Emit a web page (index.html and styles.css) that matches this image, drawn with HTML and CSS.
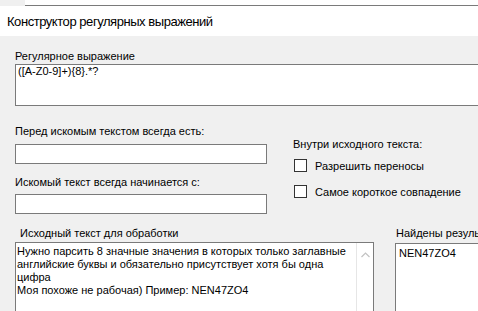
FILE: index.html
```html
<!DOCTYPE html>
<html lang="ru">
<head>
  <meta charset="UTF-8">
  <title>Конструктор регулярных выражений</title>
  <link rel="stylesheet" href="styles.css">
</head>
<body>
  <!-- Полоска над заголовком -->
  <div class="tabstrip">
    <span class="tab-gap"></span>
    <span class="tab-rest"></span>
  </div>

  <div class="titlebar">Конструктор регулярных выражений</div>

  <div class="panel">
    <div class="label label-regex">Регулярное выражение</div>
    <div class="box box-regex">([A-Z0-9]+){8}.*?</div>

    <div class="options">
      <div class="col-left">
        <div class="label label-before">Перед искомым текстом всегда есть:</div>
        <div class="box input input-before"></div>
        <div class="label label-start">Искомый текст всегда начинается с:</div>
        <div class="box input input-start"></div>
      </div>
      <div class="col-right">
        <div class="label">Внутри исходного текста:</div>
        <div class="check check-first"><span class="checkbox"></span><span class="check-text">Разрешить переносы</span></div>
        <div class="check"><span class="checkbox"></span><span class="check-text">Самое короткое совпадение</span></div>
      </div>
    </div>

    <div class="io">
      <div class="source">
        <div class="label label-source">Исходный текст для обработки</div>
        <div class="box box-source">
          <div class="source-text">Нужно парсить 8 значные значения в которых только заглавные английские буквы и обязательно присутствует хотя бы одна цифра<br>Моя похоже не рабочая) Пример: NEN47ZO4</div>
          <div class="scrollbar">
            <svg width="9" height="6" viewBox="0 0 9 6">
              <path d="M0.5 5 L4.5 1 L8.5 5" fill="none" stroke="#c2c2c2" stroke-width="1.2"/>
            </svg>
          </div>
        </div>
      </div>
      <div class="result">
        <div class="label">Найдены результаты:</div>
        <div class="box box-result">NEN47ZO4</div>
      </div>
    </div>
  </div>
</body>
</html>
```

FILE: styles.css
```css
/* Базовые настройки */
* {
  margin: 0;
  padding: 0;
  box-sizing: border-box;
}

body {
  width: 478px;
  height: 311px;
  overflow: hidden;
  background: #f0f0f0;
  font-family: 'Liberation Sans', Arial, sans-serif;
  font-size: 11px;
  color: #000;
}

/* Верхняя полоска */
.tabstrip {
  display: flex;
  height: 6px;
}

.tab-gap {
  width: 25px;
  background: #f0f0f0;
}

.tab-rest {
  flex: 1;
  background: #fff;
  border-bottom: 1px solid #7a7a7a;
}

/* Заголовок окна */
.titlebar {
  height: 30px;
  background: #fff;
  padding: 7px 0 0 7px;
  font-size: 13px;
  letter-spacing: -0.45px;
  line-height: 18px;
  white-space: nowrap;
}

/* Основная панель */
.panel {
  padding-left: 15px;
  overflow: hidden;
  height: 275px;
}

.label {
  line-height: 13px;
  white-space: nowrap;
}

.label-regex {
  margin-top: 14px;
}

.box {
  background: #fff;
  border: 1px solid #7a7a7a;
}

.box-regex {
  margin-top: 1px;
  width: 480px;
  height: 42px;
  padding: 0 2px;
  line-height: 13px;
}

/* Блок с опциями */
.options {
  display: flex;
}

.col-left {
  width: 252px;
  flex-shrink: 0;
}

.label-before {
  margin-top: 19px;
}

.input {
  height: 20px;
  margin-top: 6px;
}

.label-start {
  margin-top: 12px;
}

.input-start {
  margin-top: 5px;
}

.col-right {
  margin-left: 26px;
  padding-top: 32px;
}

.check {
  display: flex;
  align-items: flex-start;
  gap: 8px;
  height: 15px;
  margin-top: 11px;
  padding-left: 1px;
  white-space: nowrap;
}

.check-first {
  margin-top: 8px;
}

.check-text {
  padding-top: 1px;
  line-height: 13px;
}

.checkbox {
  width: 13px;
  height: 13px;
  background: #fff;
  border: 1px solid #333;
  flex-shrink: 0;
}

/* Исходный текст и результат */
.io {
  display: flex;
  margin-top: 13px;
}

.source {
  width: 359px;
  flex-shrink: 0;
}

.label-source {
  padding-left: 5px;
}

.box-source {
  display: flex;
  margin-top: 2px;
  height: 80px;
}

.source-text {
  flex: 1;
  padding: 1.5px 2px 0 1px;
  line-height: 13.3px;
}

.scrollbar {
  width: 17px;
  flex-shrink: 0;
  border-left: 1px solid #e6e6e6;
  display: flex;
  justify-content: center;
  padding-top: 9px;
}

.result {
  margin-left: 21px;
  flex-shrink: 0;
}

.result .label {
  padding-left: 1px;
}

.box-result {
  margin-top: 3px;
  width: 120px;
  height: 80px;
  padding: 3px 3px 0;
  line-height: 13px;
}
```
